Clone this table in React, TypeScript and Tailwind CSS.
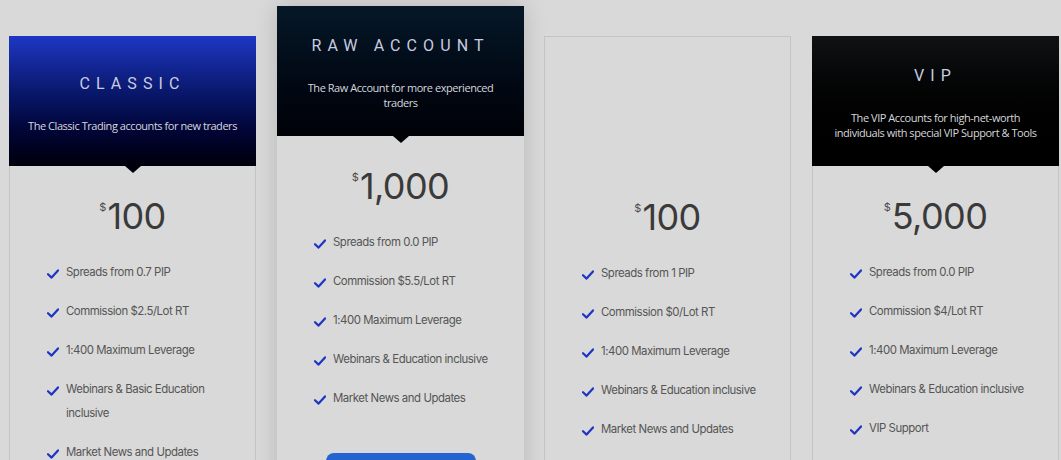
import React from "react";

type Plan = {
  title?: string;
  sub?: string[];
  header: string;
  pointer?: string;
  price: string;
  items: string[][];
  raised?: boolean;
  button?: boolean;
  bordered?: boolean;
  ml: string;
};

const plans: Plan[] = [
  {
    title: "CLASSIC",
    sub: ["The Classic Trading accounts for new traders"],
    header: "bg-gradient-to-b from-[#1e37c4] to-[#00000c]",
    pointer: "border-t-[#00000c]",
    price: "100",
    items: [
      ["Spreads from 0.7 PIP"],
      ["Commission $2.5/Lot RT"],
      ["1:400 Maximum Leverage"],
      ["Webinars & Basic Education", "inclusive"],
      ["Market News and Updates"],
    ],
    bordered: true,
    ml: "ml-0",
  },
  {
    title: "RAW ACCOUNT",
    sub: ["The Raw Account for more experienced", "traders"],
    header: "bg-gradient-to-b from-[#061828] to-[#000207]",
    pointer: "border-t-[#000207]",
    price: "1,000",
    items: [
      ["Spreads from 0.0 PIP"],
      ["Commission $5.5/Lot RT"],
      ["1:400 Maximum Leverage"],
      ["Webinars & Education inclusive"],
      ["Market News and Updates"],
    ],
    raised: true,
    button: true,
    ml: "ml-[21px]",
  },
  {
    header: "bg-transparent",
    price: "100",
    items: [
      ["Spreads from 1 PIP"],
      ["Commission $0/Lot RT"],
      ["1:400 Maximum Leverage"],
      ["Webinars & Education inclusive"],
      ["Market News and Updates"],
    ],
    bordered: true,
    ml: "ml-[20px]",
  },
  {
    title: "VIP",
    sub: ["The VIP Accounts for high-net-worth", "individuals with special VIP Support & Tools"],
    header: "bg-gradient-to-b from-[#101214] to-[#000000]",
    pointer: "border-t-[#000000]",
    price: "5,000",
    items: [
      ["Spreads from 0.0 PIP"],
      ["Commission $4/Lot RT"],
      ["1:400 Maximum Leverage"],
      ["Webinars & Education inclusive"],
      ["VIP Support"],
    ],
    bordered: true,
    ml: "ml-[21px]",
  },
];

function Check() {
  return (
    <svg width="12" height="10" viewBox="0 0 12 10" className="shrink-0 mt-[9px]">
      <path d="M1 5.2 L4.6 8.6 L11 1.4" fill="none" stroke="#1d35c4" strokeWidth="2.2" strokeLinecap="round" strokeLinejoin="round" />
    </svg>
  );
}

function Card({ p }: { p: Plan }) {
  return (
    <div
      className={
        "w-[247px] shrink-0 flex flex-col h-[560px] " +
        p.ml +
        " " +
        (p.raised ? "shadow-[0_0_22px_rgba(0,0,0,0.16)]" : "mt-[30px]") +
        (p.bordered ? " border border-[#c4c4c4]" : "")
      }
    >
      <div
        className={
          "relative h-[130px] flex flex-col items-center justify-center px-3 pt-[4px] text-center " +
          p.header +
          (p.bordered && p.title ? " -mx-px -mt-px" : "")
        }
      >
        {p.title && (
          <>
            <div className="text-[16px] leading-[20px] tracking-[0.38em] text-[#c9cce0] font-['Roboto',sans-serif]">
              {p.title}
            </div>
            <div className="mt-[24px] text-[11px] leading-[15px] tracking-[-0.45px] text-[#d6d6dc] font-['Open_Sans',sans-serif]">
              {p.sub!.map((s, i) => (
                <div key={i}>{s}</div>
              ))}
            </div>
          </>
        )}
        {p.pointer && (
          <div
            className={
              "absolute left-1/2 -translate-x-1/2 bottom-[-7px] w-0 h-0 border-l-[8px] border-r-[8px] border-t-[7px] border-l-transparent border-r-transparent " +
              p.pointer
            }
          />
        )}
      </div>
      <div className="flex justify-center mt-[32px] font-['Inter',sans-serif] text-[#3a3a3a]">
        <span className="text-[11px] leading-[14px] mt-[2px] mr-[1px] text-[#4a4a4a]">$</span>
        <span className="text-[36px] leading-[36px] tracking-[-0.6px]">{p.price}</span>
      </div>
      <ul className="mt-[26px] pl-[37px] pr-3 flex flex-col gap-[15px] font-['Inter',sans-serif] text-[11.4px] tracking-[-0.45px] leading-[24px] text-[#555555]">
        {p.items.map((it, i) => (
          <li key={i} className="flex items-start gap-[7px]">
            <Check />
            <div>
              {it.map((l, j) => (
                <div key={j}>{l}</div>
              ))}
            </div>
          </li>
        ))}
      </ul>
      {p.button && (
        <div className="flex justify-center mt-[43px]">
          <div className="w-[150px] h-[42px] rounded-[8px] bg-[#2563d0]" />
        </div>
      )}
    </div>
  );
}

export default function App() {
  return (
    <div className="w-[1061px] h-[460px] overflow-hidden bg-[#d9d9d9]">
      <div className="flex items-start pl-[9px] pt-[6px]">
        {plans.map((p, i) => (
          <Card key={i} p={p} />
        ))}
      </div>
    </div>
  );
}
